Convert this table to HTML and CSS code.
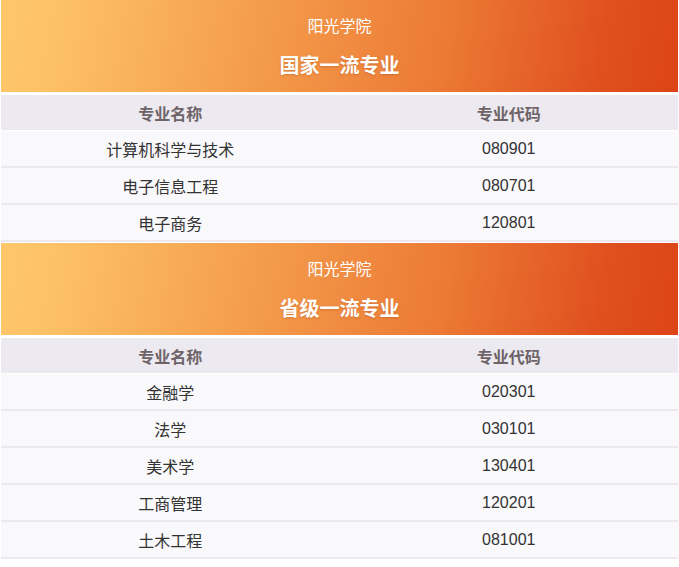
FILE: index.html
```html
<!DOCTYPE html>
<html lang="zh-CN">
<head>
<meta charset="utf-8">
<title>阳光学院 一流专业</title>
<link rel="stylesheet" href="styles.css">
</head>
<body>
<main class="page">
  <section class="block">
    <header class="banner">
      <p class="school">阳光学院</p>
      <h2 class="title">国家一流专业</h2>
    </header>
    <div class="thead">
      <span class="cell">专业名称</span>
      <span class="cell">专业代码</span>
    </div>
    <div class="tbody">
      <div class="row"><span class="cell">计算机科学与技术</span><span class="cell">080901</span></div>
      <div class="row"><span class="cell">电子信息工程</span><span class="cell">080701</span></div>
      <div class="row"><span class="cell">电子商务</span><span class="cell">120801</span></div>
    </div>
  </section>
  <section class="block">
    <header class="banner">
      <p class="school">阳光学院</p>
      <h2 class="title">省级一流专业</h2>
    </header>
    <div class="thead">
      <span class="cell">专业名称</span>
      <span class="cell">专业代码</span>
    </div>
    <div class="tbody">
      <div class="row"><span class="cell">金融学</span><span class="cell">020301</span></div>
      <div class="row"><span class="cell">法学</span><span class="cell">030101</span></div>
      <div class="row"><span class="cell">美术学</span><span class="cell">130401</span></div>
      <div class="row"><span class="cell">工商管理</span><span class="cell">120201</span></div>
      <div class="row"><span class="cell">土木工程</span><span class="cell">081001</span></div>
    </div>
  </section>
</main>
</body>
</html>
```

FILE: styles.css
```css
* { box-sizing: border-box; }
html, body { margin: 0; padding: 0; background: #ffffff; }
body {
  font-family: "Liberation Sans", "Noto Sans CJK SC", sans-serif;
  color: #333333;
}
.page {
  width: 679px;
  padding: 0 1px;
  display: flex;
  flex-direction: column;
  gap: 1px;
}
.block {
  display: flex;
  flex-direction: column;
}
.banner {
  height: 92px;
  margin-bottom: 3px;
  background: linear-gradient(100deg, #ffc76b 0%, #fdbf66 10%, #f49c4c 38%, #ec7a35 65%, #e0501f 88%, #dc4417 100%);
  display: flex;
  flex-direction: column;
  align-items: center;
  color: #ffffff;
}
.school {
  margin: 18px 0 0;
  font-size: 16px;
  line-height: 18px;
  font-weight: 400;
}
.title {
  margin: 19px 0 0;
  font-size: 20px;
  line-height: 22px;
  font-weight: 700;
  text-shadow: 0 1px 2px rgba(120, 40, 0, 0.25);
}
.thead {
  height: 35px;
  margin-bottom: 1px;
  background: #ece9f0;
  display: grid;
  grid-template-columns: 1fr 1fr;
  align-items: center;
  font-size: 16px;
  font-weight: 700;
  color: #6e6468;
}
.tbody {
  display: flex;
  flex-direction: column;
}
.row {
  height: 37px;
  background: #f9f8fb;
  border-bottom: 2px solid #ebe8ef;
  display: grid;
  grid-template-columns: 1fr 1fr;
  align-items: center;
  font-size: 16px;
  color: #333333;
}
.cell {
  text-align: center;
}
```
